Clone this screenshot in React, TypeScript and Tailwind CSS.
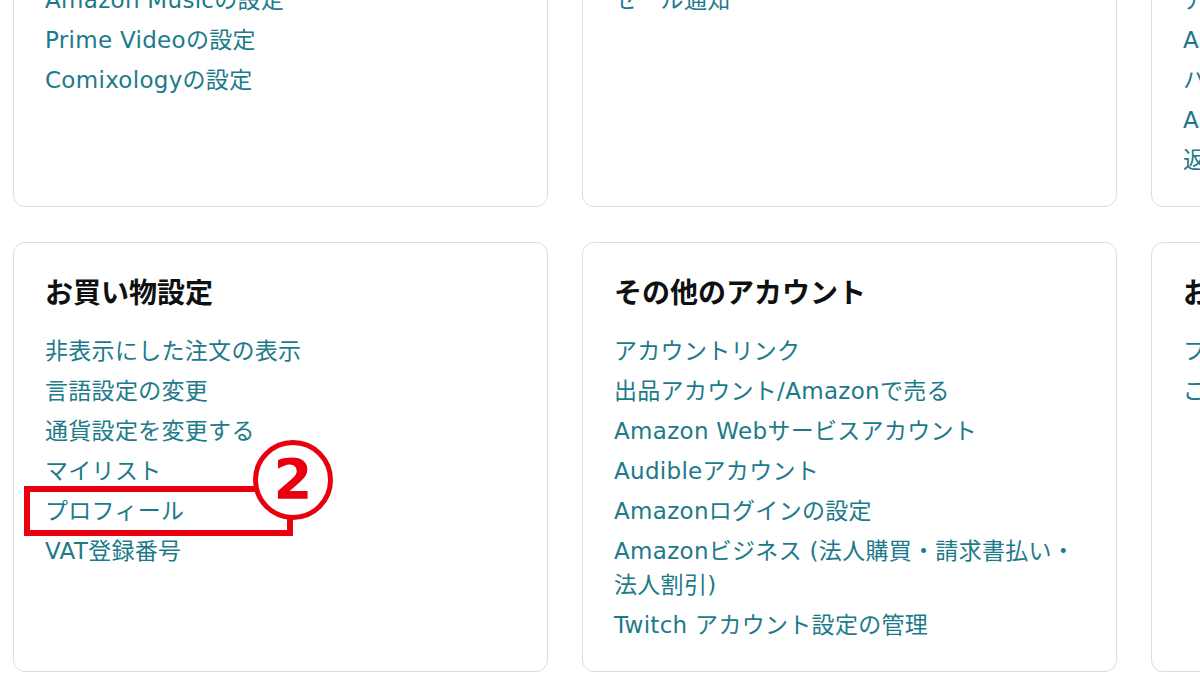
import React from "react";

type Card = {
  title: string;
  items: React.ReactNode[];
};

const TOP_ROW: Card[] = [
  {
    title: "デジタルコンテンツとデバイス",
    items: ["コンテンツと端末の管理", "Amazon Musicの設定", "Prime Videoの設定", "Comixologyの設定"],
  },
  {
    title: "メールアラート、メッセージ、広告",
    items: ["広告表示の設定", "セール通知"],
  },
  {
    title: "注文と購入",
    items: ["注文履歴", "アドレス帳", "Amazonポイント", "ハロウィンセール", "Amazonギフトカード", "返品・交換"],
  },
];

const BOTTOM_ROW: Card[] = [
  {
    title: "お買い物設定",
    items: [
      "非表示にした注文の表示",
      "言語設定の変更",
      "通貨設定を変更する",
      "マイリスト",
      "プロフィール",
      "VAT登録番号",
    ],
  },
  {
    title: "その他のアカウント",
    items: [
      "アカウントリンク",
      "出品アカウント/Amazonで売る",
      "Amazon Webサービスアカウント",
      "Audibleアカウント",
      "Amazonログインの設定",
      <>
        Amazonビジネス (法人購買・請求書払い・
        <br />
        法人割引)
      </>,
      "Twitch アカウント設定の管理",
    ],
  },
  {
    title: "お知らせ設定",
    items: ["ファミリー設定", "ご利用中のデバイス"],
  },
];

const SettingsCard = ({ card, annotate }: { card: Card; annotate?: boolean }) => {
  return (
    <div className="relative w-[535px] shrink-0 rounded-[12px] border border-[#dcdcdc] bg-white px-[31px] pt-[33px] pb-[29px]">
      <h2 className="text-[28px] leading-[36px] font-bold text-[#0f1111] whitespace-nowrap">{card.title}</h2>
      <ul className="mt-[22px] flex flex-col gap-[6px]">
        {card.items.map((item, i) => (
          <li key={i} className="text-[23px] leading-[34px] tracking-[0.3px] text-[#1d7a8a] whitespace-nowrap">
            {item}
          </li>
        ))}
      </ul>
      {annotate && (
        <>
          {/* red highlight around プロフィール */}
          <div className="absolute left-[10px] top-[243px] w-[269px] h-[50px] border-[6px] border-[#e8000f]" />
          <div className="absolute left-[239px] top-[197px] w-[80px] h-[80px] rounded-full border-[5px] border-[#e8000f] bg-white flex items-center justify-center">
            <span className="font-['DejaVu_Sans',sans-serif] text-[56px] leading-none font-bold text-[#e8000f] -mt-[3px]">
              2
            </span>
          </div>
        </>
      )}
    </div>
  );
};

export default function App() {
  return (
    <div className="w-[1200px] h-[687px] overflow-hidden bg-white font-['DejaVu_Sans','Noto_Sans_CJK_JP',sans-serif]">
      <div className="flex gap-[34px] pl-[13px] -mt-[149px]">
        {TOP_ROW.map((card) => (
          <SettingsCard key={card.title} card={card} />
        ))}
      </div>
      <div className="flex gap-[34px] pl-[13px] mt-[35px]">
        {BOTTOM_ROW.map((card, i) => (
          <SettingsCard key={card.title} card={card} annotate={i === 0} />
        ))}
      </div>
    </div>
  );
}
